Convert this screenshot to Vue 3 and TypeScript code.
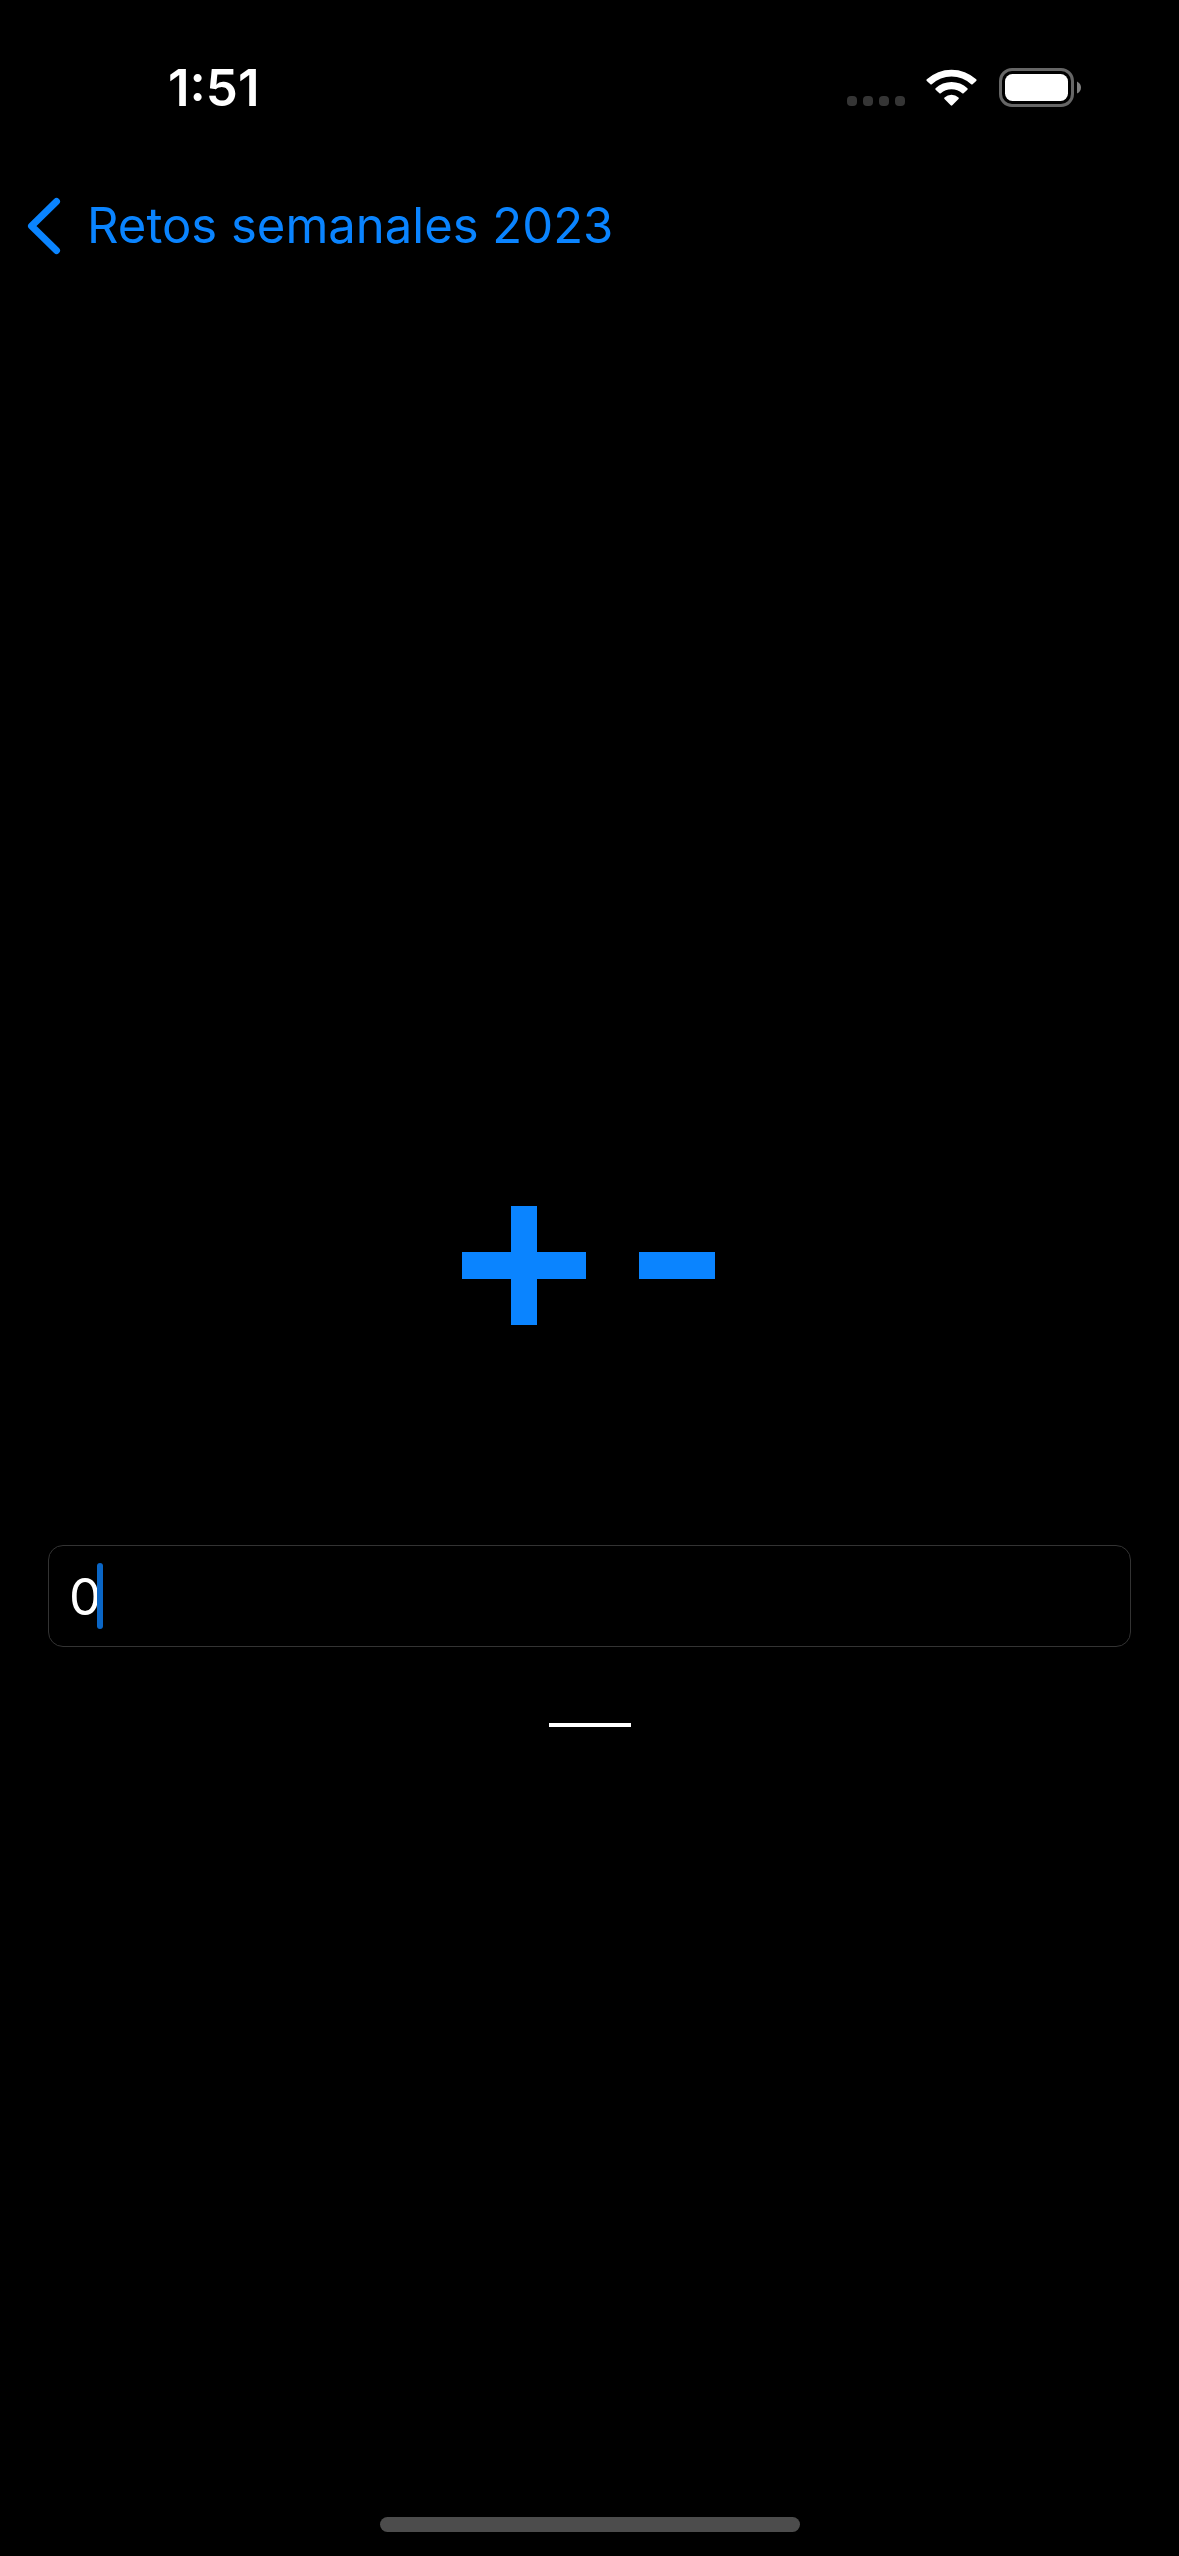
<script setup lang="ts">
import { ref } from 'vue'

const value = ref<string>('0')
const result = ref<string>('')

function step(amount: number): void {
  value.value = String((Number(value.value) || 0) + amount)
}
</script>

<template>
  <div class="screen">
    <header class="status">
      <time class="clock">1:51</time>
      <div class="indicators">
        <svg class="signal" viewBox="0 0 58 39" width="58" height="39" aria-hidden="true">
          <rect v-for="n in 4" :key="n" :x="(n - 1) * 16" y="28" width="10" height="10" rx="4" fill="#353535" />
        </svg>
        <svg class="wifi" viewBox="0 0 52 39" width="52" height="39" fill="#fff" aria-hidden="true">
          <path d="M0.8 11.3 A36.5 36.5 0 0 1 50.2 11.3 Q51 12.1 50.2 12.9 L46.6 16.3 Q45.9 16.9 45.2 16.3 A28.7 28.7 0 0 0 5.8 16.3 Q5.1 16.9 4.4 16.3 L0.8 12.9 Q0 12.1 0.8 11.3 Z" />
          <path d="M9.6 20.2 A23.5 23.5 0 0 1 41.4 20.2 Q42.1 21 41.4 21.8 L37.6 25.3 Q36.9 25.9 36.2 25.3 A15.8 15.8 0 0 0 14.8 25.3 Q14.1 25.9 13.4 25.3 L9.6 21.8 Q8.9 21 9.6 20.2 Z" />
          <path d="M18.5 29.4 A10.8 10.8 0 0 1 32.5 29.4 Q33.3 30.2 32.5 31 L26.3 37.3 Q25.5 38.1 24.7 37.3 L18.5 31 Q17.7 30.2 18.5 29.4 Z" />
        </svg>
        <svg viewBox="0 0 82 39" width="82" height="39" aria-hidden="true">
          <rect x="1.5" y="1.5" width="72" height="36" rx="11.5" fill="none" stroke="#666" stroke-width="3" />
          <rect x="6" y="6" width="63" height="27" rx="7.5" fill="#fff" />
          <path d="M78 13.5 Q82 15.5 82 19.5 Q82 23.5 78 25.5 Z" fill="#808080" />
        </svg>
      </div>
    </header>

    <nav class="bar">
      <a class="back" href="#">
        <svg viewBox="0 0 34 58" width="34" height="58" aria-hidden="true">
          <path d="M29.5 4.5 L4.5 29 L29.5 53.5" fill="none" stroke="#0a84ff" stroke-width="7" stroke-linecap="round" stroke-linejoin="round" />
        </svg>
        <span>Retos semanales 2023</span>
      </a>
    </nav>

    <main class="content">
      <div class="steppers">
        <button type="button" aria-label="Sumar" @click="step(1)">
          <svg viewBox="0 0 124 119" width="124" height="119" aria-hidden="true">
            <path d="M49 0h26v46h49v27H75v46H49V73H0V46h49z" fill="#0a84ff" />
          </svg>
        </button>
        <button type="button" aria-label="Restar" @click="step(-1)">
          <svg viewBox="0 0 76 119" width="76" height="119" aria-hidden="true">
            <path d="M0 46h76v27H0z" fill="#0a84ff" />
          </svg>
        </button>
      </div>

      <div class="field">
        <input v-model="value" type="text" inputmode="numeric" aria-label="Valor" />
        <span class="caret" aria-hidden="true"></span>
      </div>

      <output class="result">{{ result }}</output>
    </main>

    <footer class="home"><span class="pill"></span></footer>
  </div>
</template>

<style>
body {
  margin: 0;
  background: #000;
}
</style>

<style scoped>
.screen {
  display: flex;
  flex-direction: column;
  min-height: 100vh;
  background: #000;
  color: #fff;
  font-family: Inter, 'Liberation Sans', sans-serif;
}

svg {
  display: block;
}

.status {
  display: flex;
  align-items: center;
  justify-content: space-between;
  box-sizing: border-box;
  height: 175px;
  padding: 0 98px 0 168px;
}

.clock {
  font-size: 51px;
  font-weight: 600;
  line-height: 60px;
}

.indicators {
  display: flex;
  gap: 21px;
}

.bar {
  display: flex;
  align-items: center;
  height: 102px;
  padding: 0 27px;
}

.back {
  display: flex;
  align-items: center;
  gap: 26px;
  color: #0a84ff;
  font-size: 49px;
  line-height: 60px;
  text-decoration: none;
}

.content {
  display: flex;
  flex: 1;
  flex-direction: column;
  align-items: center;
  justify-content: center;
  padding: 0 48px;
}

.steppers {
  display: flex;
  align-items: center;
  gap: 53px;
  height: 429px;
  padding-right: 2px;
}

.steppers button {
  padding: 0;
  border: 0;
  background: none;
  cursor: pointer;
}

.field {
  position: relative;
  align-self: stretch;
  margin-top: 65px;
}

.field input {
  display: block;
  box-sizing: border-box;
  width: 100%;
  height: 102px;
  padding: 2px 20px 0;
  border: 1px solid #333;
  border-radius: 15px;
  outline: 0;
  background: #000;
  color: #fff;
  font: 51px/60px Inter, 'Liberation Sans', sans-serif;
}

.caret {
  position: absolute;
  top: 18px;
  left: 49px;
  width: 6px;
  height: 66px;
  border-radius: 3px;
  background: #0a66c6;
}

.result {
  width: 82px;
  height: 4px;
  margin-top: 76px;
  background: #fff;
}

.home {
  display: flex;
  align-items: center;
  justify-content: center;
  height: 56px;
  padding-bottom: 8px;
  box-sizing: border-box;
}

.pill {
  width: 420px;
  height: 15px;
  border-radius: 8px;
  background: #4c4c4c;
}
</style>
